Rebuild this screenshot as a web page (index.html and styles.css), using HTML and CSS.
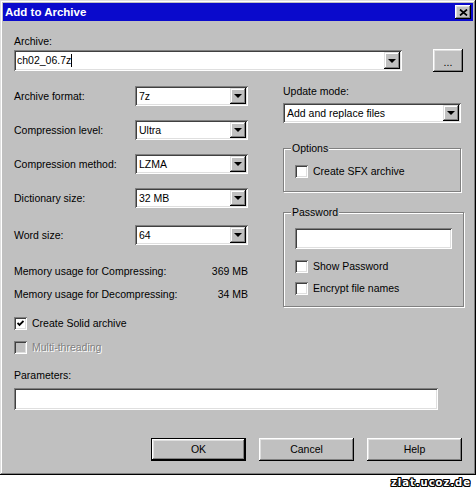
FILE: index.html
```html
<!DOCTYPE html>
<html lang="en">
<head>
  <meta charset="UTF-8">
  <title>Add to Archive</title>
  <link rel="stylesheet" href="styles.css">
</head>
<body>
  <div class="window">
    <div class="titlebar">
      <span class="title">Add to Archive</span>
      <span class="close-btn">
        <svg width="9" height="7" viewBox="0 0 9 7"><path d="M1 0.5L8 6.5M8 0.5L1 6.5" stroke="#000" stroke-width="1.7"/></svg>
      </span>
    </div>

    <div class="dialog">
      <div class="label">Archive:</div>
      <div class="archive-row">
        <div class="combo combo-archive">
          <span class="combo-text">ch02_06.7z<span class="caret"></span></span>
          <span class="drop"><i class="arrow"></i></span>
        </div>
        <button class="btn btn-browse">...</button>
      </div>

      <div class="columns">
        <div class="col-left">
          <div class="field">
            <span class="field-label">Archive format:</span>
            <div class="combo combo-small"><span class="combo-text">7z</span><span class="drop"><i class="arrow"></i></span></div>
          </div>
          <div class="field">
            <span class="field-label">Compression level:</span>
            <div class="combo combo-small"><span class="combo-text">Ultra</span><span class="drop"><i class="arrow"></i></span></div>
          </div>
          <div class="field">
            <span class="field-label">Compression method:</span>
            <div class="combo combo-small"><span class="combo-text">LZMA</span><span class="drop"><i class="arrow"></i></span></div>
          </div>
          <div class="field">
            <span class="field-label">Dictionary size:</span>
            <div class="combo combo-small"><span class="combo-text">32 MB</span><span class="drop"><i class="arrow"></i></span></div>
          </div>
          <div class="field field-word">
            <span class="field-label">Word size:</span>
            <div class="combo combo-small"><span class="combo-text">64</span><span class="drop"><i class="arrow"></i></span></div>
          </div>

          <div class="memory memory-first">
            <span>Memory usage for Compressing:</span>
            <span>369 MB</span>
          </div>
          <div class="memory">
            <span>Memory usage for Decompressing:</span>
            <span>34 MB</span>
          </div>
        </div>

        <div class="col-right">
          <div class="label">Update mode:</div>
          <div class="combo combo-wide"><span class="combo-text">Add and replace files</span><span class="drop"><i class="arrow"></i></span></div>

          <fieldset class="group group-options">
            <legend>Options</legend>
            <div class="group-body">
              <label class="check"><span class="box"></span>Create SFX archive</label>
            </div>
          </fieldset>

          <fieldset class="group group-password">
            <legend>Password</legend>
            <div class="group-body">
              <div class="edit edit-password"></div>
              <label class="check check-show"><span class="box"></span>Show Password</label>
              <label class="check check-encrypt"><span class="box"></span>Encrypt file names</label>
            </div>
          </fieldset>
        </div>
      </div>

      <label class="check check-solid">
        <span class="box"><svg width="7" height="7" viewBox="0 0 7 7"><path d="M0.5 3L2.5 5L6.5 1" fill="none" stroke="#000" stroke-width="1.8"/></svg></span>
        Create Solid archive
      </label>
      <label class="check check-multi disabled"><span class="box"></span>Multi-threading</label>

      <div class="label label-params">Parameters:</div>
      <div class="edit edit-params"></div>

      <div class="buttons">
        <button class="btn btn-default">OK</button>
        <button class="btn">Cancel</button>
        <button class="btn">Help</button>
      </div>
    </div>
  </div>
  <div class="watermark">zlat.ucoz.de</div>
</body>
</html>
```

FILE: styles.css
```css
body {
  margin: 0;
  background: #fff;
  font-family: "Liberation Sans", Arial, sans-serif;
  font-size: 10.5px;
  line-height: 13px;
  color: #000;
}

.window {
  box-sizing: border-box;
  width: 476px;
  height: 475px;
  padding: 3px;
  background: #c0c0c0;
  box-shadow: inset -1px -1px #000, inset 1px 1px #dfdfdf, inset -2px -2px #808080, inset 2px 2px #fff;
}

.titlebar {
  display: flex;
  align-items: center;
  height: 18px;
  padding: 0 2px;
  background: #0a0acc;
  color: #fff;
}
.title {
  flex: 1;
  font-weight: bold;
  font-size: 11.5px;
}
.close-btn {
  display: flex;
  align-items: center;
  justify-content: center;
  width: 16px;
  height: 14px;
  background: #c0c0c0;
  box-shadow: inset -1px -1px #000, inset 1px 1px #fff, inset -2px -2px #808080, inset 2px 2px #dfdfdf;
}

.dialog {
  padding: 14px 10px 0 11px;
}

.archive-row {
  display: flex;
  align-items: center;
  margin-top: 1px;
  height: 23px;
}

/* combo boxes */
.combo {
  display: flex;
  box-sizing: border-box;
  height: 20px;
  padding: 2px;
  background: #fff;
  box-shadow: inset 1px 1px #808080, inset -1px -1px #fff, inset 2px 2px #404040, inset -2px -2px #dfdfdf;
}
.combo-archive {
  width: 388px;
  height: 21px;
}
.combo-small {
  width: 113px;
}
.combo-wide {
  width: 178px;
  margin-top: 5px;
}
.combo-text {
  flex: 1;
  padding-left: 2px;
  line-height: 16px;
  white-space: nowrap;
}
.combo-archive .combo-text {
  padding-left: 1px;
  line-height: 17px;
}
.caret {
  display: inline-block;
  width: 1px;
  height: 13px;
  background: #000;
  vertical-align: -3px;
}
.drop {
  display: flex;
  align-items: center;
  justify-content: center;
  width: 16px;
  background: #c0c0c0;
  box-shadow: inset -1px -1px #000, inset 1px 1px #dfdfdf, inset -2px -2px #808080, inset 2px 2px #fff;
}
.arrow {
  width: 0;
  height: 0;
  border-style: solid;
  border-width: 4px 4px 0;
  border-color: #000 transparent transparent;
}

/* buttons */
.btn {
  padding: 0;
  border: 0;
  font: inherit;
  color: #000;
  background: #c0c0c0;
  box-shadow: inset -1px -1px #000, inset 1px 1px #fff, inset -2px -2px #808080, inset 2px 2px #dfdfdf;
}
.btn-browse {
  width: 30px;
  height: 23px;
  margin-left: auto;
  padding-top: 4px;
}
.btn-default {
  box-shadow: inset 0 0 0 1px #000, inset -2px -2px #000, inset 2px 2px #fff, inset -3px -3px #808080, inset 3px 3px #dfdfdf;
}

/* two columns */
.columns {
  display: flex;
  margin-top: 14px;
}
.col-left {
  width: 234px;
}
.col-right {
  width: 178px;
  margin-left: 35px;
  margin-top: -1px;
}

.field {
  display: flex;
  align-items: center;
  margin-bottom: 14px;
}
.field-label {
  width: 121px;
}
.field-word {
  margin-top: 17px;
  margin-bottom: 0;
}

.memory {
  display: flex;
  justify-content: space-between;
  margin-top: 10px;
}
.memory-first {
  margin-top: 20px;
}

/* group boxes */
.group {
  margin: 0;
  padding: 0;
  border: 1px solid #808080;
  box-shadow: inset 1px 1px #fff, 1px 1px #fff;
}
.group legend {
  margin-left: 7px;
  padding: 0 1px;
  background: #c0c0c0;
}
.group-options {
  margin-top: 19px;
}
.group-options .group-body {
  padding: 10px 11px 13px;
}
.group-password {
  margin-top: 14px;
}
.group-password .group-body {
  padding: 9px 11px 11px;
}
.edit {
  box-sizing: border-box;
  background: #fff;
  box-shadow: inset 1px 1px #808080, inset -1px -1px #fff, inset 2px 2px #404040, inset -2px -2px #dfdfdf;
}
.edit-password {
  width: 157px;
  height: 21px;
}
.check-show {
  margin-top: 11px;
}
.check-encrypt {
  margin-top: 9px;
}

/* check boxes */
.check {
  display: flex;
  align-items: center;
  gap: 5px;
  height: 13px;
}
.box {
  display: flex;
  align-items: center;
  justify-content: center;
  box-sizing: border-box;
  width: 13px;
  height: 13px;
  background: #fff;
  box-shadow: inset 1px 1px #808080, inset -1px -1px #fff, inset 2px 2px #404040, inset -2px -2px #dfdfdf;
}
.check-solid {
  margin-top: 10px;
}
.check-multi {
  margin-top: 11px;
}
.disabled {
  color: #808080;
  text-shadow: 1px 1px #fff;
}
.disabled .box {
  background: #c0c0c0;
}

.label-params {
  margin-top: 15px;
}
.edit-params {
  width: 424px;
  height: 22px;
  margin-top: 6px;
}

.buttons {
  display: flex;
  justify-content: flex-end;
  gap: 13px;
  margin-top: 28px;
  padding-right: 1px;
}
.buttons .btn {
  width: 95px;
  height: 23px;
}

.watermark {
  padding-right: 5px;
  text-align: right;
  font-family: "DejaVu Sans", sans-serif;
  font-weight: bold;
  font-size: 10px;
  letter-spacing: 1px;
  line-height: 15px;
  color: #fff;
  text-shadow: 1px 0 #000, -1px 0 #000, 0 1px #000, 0 -1px #000, 1px 1px #000, -1px -1px #000, 1px -1px #000, -1px 1px #000;
}
```
